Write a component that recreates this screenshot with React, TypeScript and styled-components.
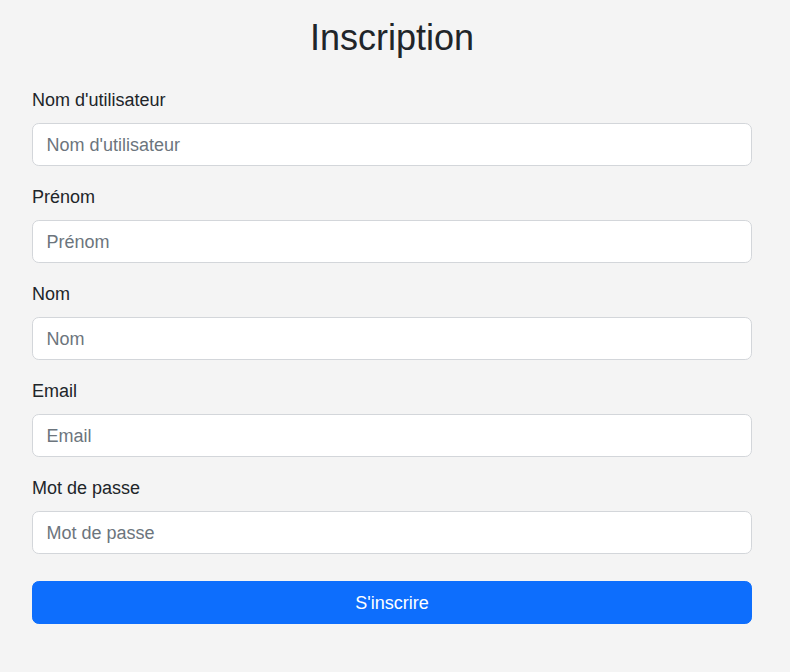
import React from 'react';
import styled, { createGlobalStyle } from 'styled-components';

const GlobalStyle = createGlobalStyle`
  html, body {
    margin: 0;
    padding: 0;
    background: #f4f4f4;
    color: #212529;
    font-family: "Liberation Sans", Arial, sans-serif;
    font-size: 18px;
  }
  * {
    box-sizing: border-box;
  }
`;

const Page = styled.div`
  width: 790px;
  min-height: 672px;
  padding: 16px 38px 0 32px;
`;

const Title = styled.h1`
  margin: 0 0 28px;
  font-size: 36px;
  font-weight: 400;
  line-height: 43px;
  text-align: center;
  color: #212529;
`;

const Form = styled.form`
  display: flex;
  flex-direction: column;
  width: 720px;
`;

const Field = styled.div`
  display: flex;
  flex-direction: column;
  margin-bottom: 18px;
`;

const Label = styled.label`
  font-size: 18px;
  line-height: 27px;
  margin-bottom: 9px;
`;

const Input = styled.input`
  height: 43px;
  padding: 7.75px 13.5px 5.75px;
  font-family: inherit;
  font-size: 18px;
  line-height: 27px;
  color: #212529;
  background: #fff;
  border: 1px solid #d3d6da;
  border-radius: 6.75px;
  outline: none;

  &::placeholder {
    color: #6c757d;
    opacity: 1;
  }
`;

const SubmitButton = styled.button`
  margin-top: 9px;
  height: 43px;
  padding: 7.75px 13.5px 5.75px;
  font-family: inherit;
  font-size: 18px;
  line-height: 27px;
  color: #fff;
  background: #0d6efd;
  border: 1px solid #0d6efd;
  border-radius: 6.75px;
  cursor: pointer;
`;

const fields = [
  { id: 'username', label: "Nom d'utilisateur", type: 'text' },
  { id: 'firstname', label: 'Prénom', type: 'text' },
  { id: 'lastname', label: 'Nom', type: 'text' },
  { id: 'email', label: 'Email', type: 'email' },
  { id: 'password', label: 'Mot de passe', type: 'password' },
];

const App = () => (
  <Page>
    <GlobalStyle />
    <Title>Inscription</Title>
    <Form onSubmit={e => e.preventDefault()}>
      {fields.map(f => (
        <Field key={f.id}>
          <Label htmlFor={f.id}>{f.label}</Label>
          <Input id={f.id} type={f.type} placeholder={f.label} />
        </Field>
      ))}
      <SubmitButton type="submit">S'inscrire</SubmitButton>
    </Form>
  </Page>
);

export default App;
